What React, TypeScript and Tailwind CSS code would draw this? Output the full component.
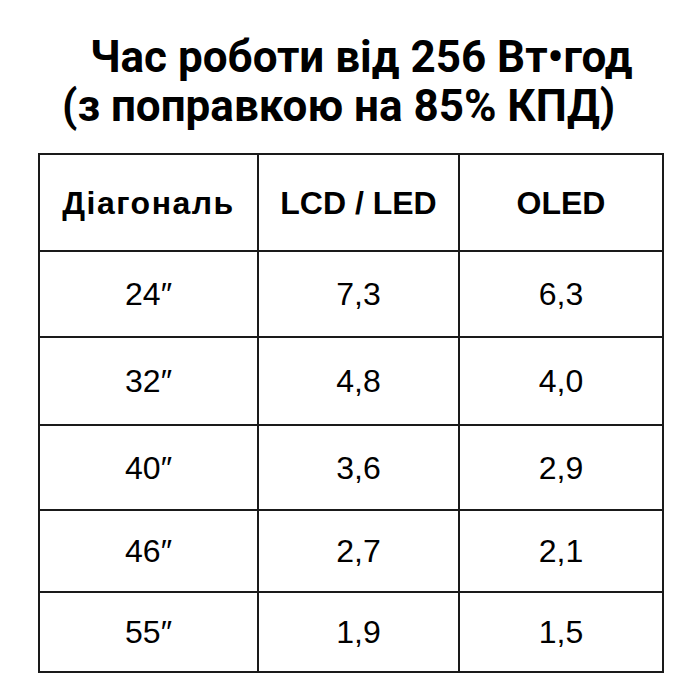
import React from 'react';

const rows: [string, string, string, string][] = [
  ['24″', '7,3', '6,3', 'h-[86px]'],
  ['32″', '4,8', '4,0', 'h-[88px]'],
  ['40″', '3,6', '2,9', 'h-[85px]'],
  ['46″', '2,7', '2,1', 'h-[82px]'],
  ['55″', '1,9', '1,5', 'h-[80px]'],
];

export default function App() {
  return (
    <div className="w-[700px] h-[700px] bg-white text-black overflow-hidden">
      <div className="pt-[33px] font-['Roboto',sans-serif] font-bold text-[44px] leading-[49px]">
        <div className="pl-[90px]">Час роботи від 256 Вт•год</div>
        <div className="pl-[62px]">(з поправкою на 85% КПД)</div>
      </div>
      <table className="mt-[22px] ml-[38px] border-collapse font-['Liberation_Sans',Arial,sans-serif]">
        <thead>
          <tr className="h-[97px]">
            <th className="w-[219px] border-2 border-[#1a1a1a] text-[32px] font-bold tracking-[1.5px]">Діагональ</th>
            <th className="w-[201px] border-2 border-[#1a1a1a] text-[32px] font-bold">LCD / LED</th>
            <th className="w-[204px] border-2 border-[#1a1a1a] text-[32px] font-bold">OLED</th>
          </tr>
        </thead>
        <tbody>
          {rows.map(([d, lcd, oled, h]) => (
            <tr key={d} className={h}>
              <td className="border-2 border-[#1a1a1a] text-center text-[32px]">{d}</td>
              <td className="border-2 border-[#1a1a1a] text-center text-[32px]">{lcd}</td>
              <td className="border-2 border-[#1a1a1a] text-center text-[32px]">{oled}</td>
            </tr>
          ))}
        </tbody>
      </table>
    </div>
  );
}
